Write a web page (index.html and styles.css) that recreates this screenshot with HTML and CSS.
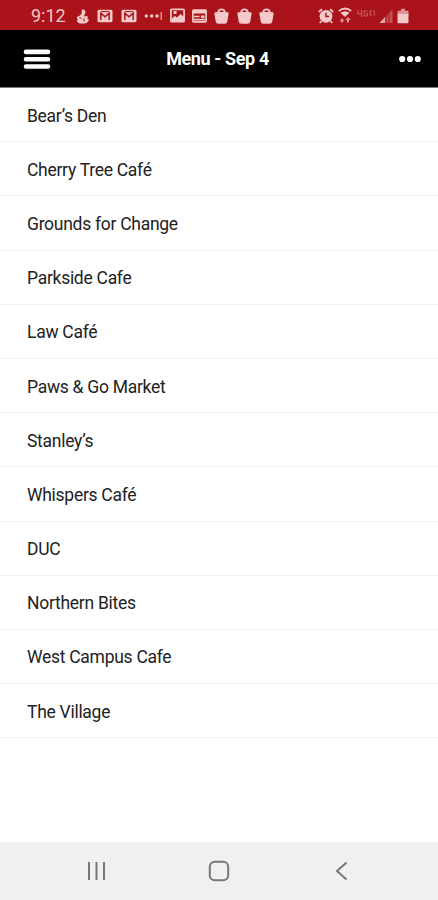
FILE: index.html
```html
<!DOCTYPE html>
<html lang="en">
<head>
<meta charset="utf-8">
<title>Menu - Sep 4</title>
<link rel="stylesheet" href="styles.css">
</head>
<body>
<svg class="defs" aria-hidden="true">
  <symbol id="mail" viewBox="0 0 16 14">
    <rect x=".5" y=".8" width="15" height="12.400" rx="1.5"/>
    <path class="cut" d="M3.800 11V4.200L8 7.800l4.200-3.600V11"/>
    <path class="cut thin" d="M4 2.600h8"/>
  </symbol>
  <symbol id="bag" viewBox="0 0 15 16">
    <path d="M1.500 4.200h12q1.200 0 1.100 1.200l-1.300 8.100q-.4 2.300-2.700 2.300H4.400q-2.300 0-2.700-2.300L.4 5.400q-.1-1.200 1.100-1.200z"/>
    <path d="M3.300 5V3.800Q4 .4 7.500.4t4.200 3.400V5z"/>
    <rect x="5.700" y="2.500" width="3.600" height="1.500" class="hole"/>
  </symbol>
</svg>
<header class="status">
  <time class="clock">9:12</time>
  <div class="icons notices">
    <svg width="14" height="16" viewBox="0 0 14 16"><path d="M5.800 1.800Q8.500.6 9.300 3q.5 1.700-.6 3.200L8 8.500l3-.6 1 1.400-.8 1.400 1.800 1-1 2.300-3 1.500H3.500L1 13.800l.6-2.300L.8 9l2.700-1.200L5.500 6z"/><path class="cut thin" d="M3.500 9.500l2 1.200M8.500 10.300l-1.500 1.500 2 1.400"/></svg>
    <svg width="16" height="14"><use href="#mail"/></svg>
    <svg width="16" height="14"><use href="#mail"/></svg>
    <svg width="18" height="16" viewBox="0 0 18 16"><circle cx="2.300" cy="8" r="1.700"/><circle cx="7.700" cy="8" r="1.700"/><circle cx="13" cy="8" r="1.700"/><path class="line thin" d="M17.200 4v8"/></svg>
    <svg width="15" height="15" viewBox="0 0 15 15"><rect class="line" x=".9" y="1.400" width="13.200" height="12.200" rx=".7"/><path d="M1.500 10.500L5 8l2 1.500L10.500 6 14 9v4.500H1.500z"/><path d="M3.500 3h3v3h-3z"/></svg>
    <svg width="15" height="14" viewBox="0 0 15 14"><rect class="line" x=".9" y="1" width="13.200" height="11.800" rx=".7"/><path d="M1 1h13v3.500H1zM9 6.500h3.500v2.500H9z"/><path class="line" d="M2 7.500h5.500M2 10.700h11"/></svg>
    <svg width="15" height="16"><use href="#bag"/></svg>
    <svg width="15" height="16"><use href="#bag"/></svg>
    <svg width="15" height="16"><use href="#bag"/></svg>
  </div>
  <div class="icons system">
    <svg width="16" height="16" viewBox="0 0 16 16"><circle cx="8" cy="8.300" r="6.400"/><path class="line" d="M.8 4L4 1.200M15.200 4L12 1.200M3.500 13L1.800 15M12.500 13l1.700 2"/><path class="cut" d="M8 4.800v3.800h3"/></svg>
    <svg width="14" height="17" viewBox="0 0 14 17"><path class="line" d="M.8 4Q7-1 13.200 4"/><path d="M2.500 5.800Q7 2.500 11.500 5.800L7 10z"/><path class="dim" d="M2 13.500L4 11l2 2.500L4 16zM7 13l3-3 3 3h-2v2.500H9V13z"/></svg>
    <svg class="network" width="18" height="16" viewBox="0 0 18 16"><path class="line thin" d="M1 2v4h3.500M4.500 2v7M10.500 3H7v5h3.500V5.500H9M13 3v4M13 3h2M13 7h2M17.200 2v6"/></svg>
    <svg width="14" height="16" viewBox="0 0 14 16"><path class="faint" d="M13.500 1.500V15H.5z"/><path class="dim" d="M6 9v6H.5z"/><path class="cut thin" d="M7 7v8M10 4v11"/></svg>
    <svg width="12" height="16" viewBox="0 0 12 16"><path class="dim" d="M4 .8h4v2h2.500q1 0 1 1v3H.5v-3q0-1 1-1H4z"/><path d="M.5 6h11v8.200q0 1-1 1h-9q-1 0-1-1z"/></svg>
  </div>
</header>
<nav class="bar">
  <svg class="burger" width="28" height="22" viewBox="0 0 28 22"><path d="M3 2.900h22M3 10.200h22M3 17.500h22"/></svg>
  <h1>Menu - Sep 4</h1>
  <svg class="more" width="22" height="8" viewBox="0 0 22 8"><circle cx="3.200" cy="4" r="3.100"/><circle cx="11" cy="4" r="3.100"/><circle cx="18.800" cy="4" r="3.100"/></svg>
</nav>
<ul class="places">
  <li>Bear’s Den</li>
  <li>Cherry Tree Café</li>
  <li>Grounds for Change</li>
  <li>Parkside Cafe</li>
  <li>Law Café</li>
  <li>Paws &amp; Go Market</li>
  <li>Stanley’s</li>
  <li>Whispers Café</li>
  <li>DUC</li>
  <li>Northern Bites</li>
  <li>West Campus Cafe</li>
  <li>The Village</li>
</ul>
<footer class="keys">
  <svg width="20" height="20" viewBox="0 0 20 20"><path d="M2 1v18M9.500 1v18M17 1v18"/></svg>
  <svg width="22" height="22" viewBox="0 0 22 22"><rect x="1.800" y="1.800" width="18.400" height="18.400" rx="5"/></svg>
  <svg width="14" height="20" viewBox="0 0 14 20"><path d="M12.500 1.500L3 10l9.500 8.500"/></svg>
</footer>
</body>
</html>
```

FILE: styles.css
```css
* { box-sizing: border-box; }
body {
  margin: 0;
  height: 900px;
  display: flex;
  flex-direction: column;
  background: #fff;
  color: #222;
  font-family: Roboto, "Liberation Sans", sans-serif;
  overflow: hidden;
}
svg { flex: none; display: block; }
.defs { position: absolute; width: 0; height: 0; }
.status {
  height: 30px;
  flex: none;
  display: flex;
  align-items: center;
  padding: 1px 29px 0 31px;
  background: #a91319;
  color: #f5c5c3;
}
.clock { width: 45px; font-size: 18px; line-height: 28px; }
.icons { display: flex; align-items: center; fill: #f5c9c9; }
.notices { gap: 7.4px; }
.system { margin-left: auto; gap: 4.2px; }
.line { fill: none; stroke: #f5c9c9; stroke-width: 1.7; }
.cut { fill: none; stroke: #a91319; stroke-width: 1.5; }
.thin { stroke-width: 1; }
.hole { fill: #a91319; }
.dim { opacity: .7; }
.faint { opacity: .35; }
.network { opacity: .45; }
.bar {
  height: 58px;
  flex: none;
  display: grid;
  grid-template-columns: 60px 1fr 60px;
  align-items: center;
  padding: 0 16px 0 23px;
  background: #000;
  color: #fff;
  border-bottom: 1px solid #777;
}
.bar h1 { margin: 1px 10px 0 0; font-size: 18px; letter-spacing: -.4px; font-weight: 700; line-height: 22px; text-align: center; }
.burger { stroke: #fff; stroke-width: 4.6; stroke-linecap: round; margin-top: 2px; }
.more { fill: #fff; justify-self: end; margin-right: 1px; }
.places { flex: 1; margin: 0; padding: 0; list-style: none; }
.places li {
  height: 54.2px;
  display: flex;
  align-items: center;
  padding: 2px 27px 0;
  border-bottom: 1px solid #eee;
  font-size: 17.5px;
  letter-spacing: -.28px;
}
.keys {
  height: 58px;
  flex: none;
  display: grid;
  grid-template-columns: 122px 122px 122px;
  justify-content: center;
  justify-items: center;
  align-items: center;
  background: #f0f0f0;
  fill: none;
  stroke: #777;
  stroke-width: 2;
}
```
